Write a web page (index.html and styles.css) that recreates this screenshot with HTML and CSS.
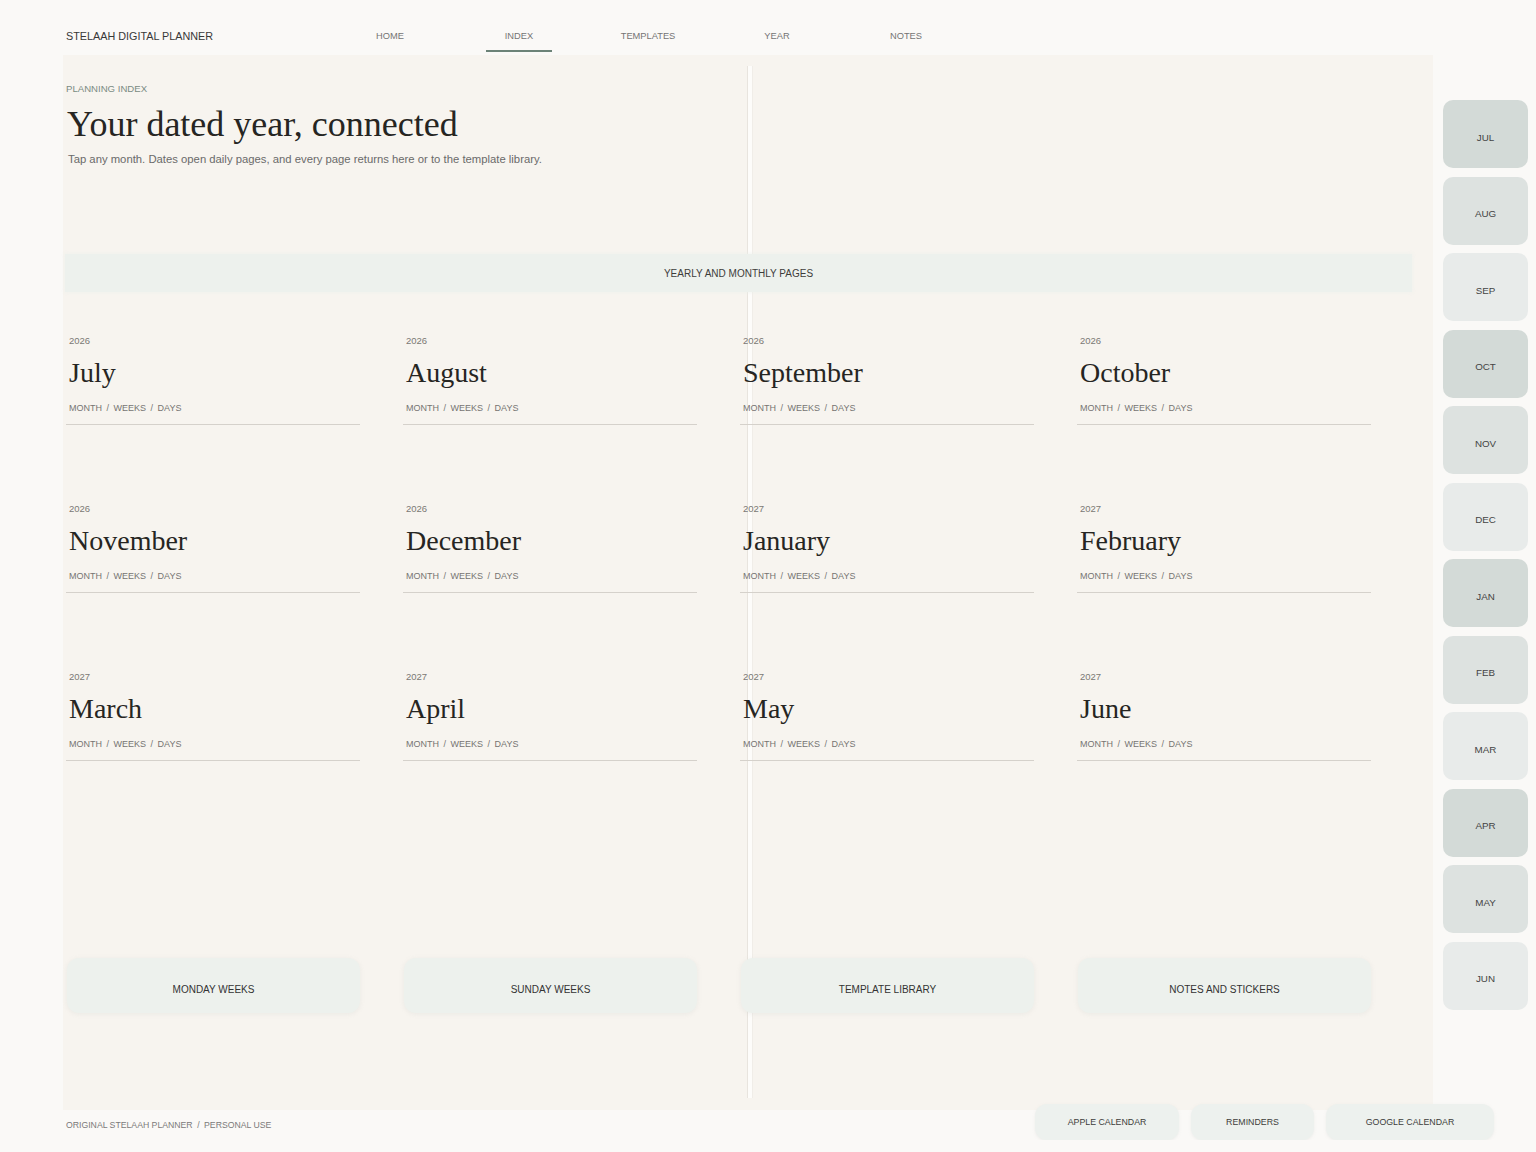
FILE: index.html
```html
<!DOCTYPE html>
<html lang="en">
<head>
  <meta charset="UTF-8">
  <meta name="viewport" content="width=device-width, initial-scale=1.0">
  <title>Stelaah Digital Planner - Index</title>
  <link rel="stylesheet" href="styles.css">
</head>
<body>
  <header class="topbar">
    <div class="brand">STELAAH DIGITAL PLANNER</div>
    <nav class="main-nav">
      <a href="#">HOME</a>
      <a href="#" class="active">INDEX</a>
      <a href="#">TEMPLATES</a>
      <a href="#">YEAR</a>
      <a href="#">NOTES</a>
    </nav>
  </header>

  <div class="layout">
    <main class="page">
      <div class="spine"></div>

      <div class="eyebrow">PLANNING INDEX</div>
      <h1>Your dated year, connected</h1>
      <p class="lead">Tap any month. Dates open daily pages, and every page returns here or to the template library.</p>

      <div class="banner">YEARLY AND MONTHLY PAGES</div>

      <div class="month-grid">
        <a class="month" href="#"><span class="year">2026</span><span class="name">July</span><span class="links">MONTH<i>/</i>WEEKS<i>/</i>DAYS</span></a>
        <a class="month" href="#"><span class="year">2026</span><span class="name">August</span><span class="links">MONTH<i>/</i>WEEKS<i>/</i>DAYS</span></a>
        <a class="month" href="#"><span class="year">2026</span><span class="name">September</span><span class="links">MONTH<i>/</i>WEEKS<i>/</i>DAYS</span></a>
        <a class="month" href="#"><span class="year">2026</span><span class="name">October</span><span class="links">MONTH<i>/</i>WEEKS<i>/</i>DAYS</span></a>
        <a class="month" href="#"><span class="year">2026</span><span class="name">November</span><span class="links">MONTH<i>/</i>WEEKS<i>/</i>DAYS</span></a>
        <a class="month" href="#"><span class="year">2026</span><span class="name">December</span><span class="links">MONTH<i>/</i>WEEKS<i>/</i>DAYS</span></a>
        <a class="month" href="#"><span class="year">2027</span><span class="name">January</span><span class="links">MONTH<i>/</i>WEEKS<i>/</i>DAYS</span></a>
        <a class="month" href="#"><span class="year">2027</span><span class="name">February</span><span class="links">MONTH<i>/</i>WEEKS<i>/</i>DAYS</span></a>
        <a class="month" href="#"><span class="year">2027</span><span class="name">March</span><span class="links">MONTH<i>/</i>WEEKS<i>/</i>DAYS</span></a>
        <a class="month" href="#"><span class="year">2027</span><span class="name">April</span><span class="links">MONTH<i>/</i>WEEKS<i>/</i>DAYS</span></a>
        <a class="month" href="#"><span class="year">2027</span><span class="name">May</span><span class="links">MONTH<i>/</i>WEEKS<i>/</i>DAYS</span></a>
        <a class="month" href="#"><span class="year">2027</span><span class="name">June</span><span class="links">MONTH<i>/</i>WEEKS<i>/</i>DAYS</span></a>
      </div>

      <div class="quick-links">
        <a href="#">MONDAY WEEKS</a>
        <a href="#">SUNDAY WEEKS</a>
        <a href="#">TEMPLATE LIBRARY</a>
        <a href="#">NOTES AND STICKERS</a>
      </div>
    </main>

    <!-- month tabs -->
    <aside class="tabs">
      <a href="#" class="tab dark">JUL</a>
      <a href="#" class="tab mid">AUG</a>
      <a href="#" class="tab light">SEP</a>
      <a href="#" class="tab dark">OCT</a>
      <a href="#" class="tab mid">NOV</a>
      <a href="#" class="tab light">DEC</a>
      <a href="#" class="tab dark">JAN</a>
      <a href="#" class="tab mid">FEB</a>
      <a href="#" class="tab light">MAR</a>
      <a href="#" class="tab dark">APR</a>
      <a href="#" class="tab mid">MAY</a>
      <a href="#" class="tab light">JUN</a>
    </aside>
  </div>

  <footer class="footer">
    <div class="credit">ORIGINAL STELAAH PLANNER<i>/</i>PERSONAL USE</div>
    <div class="calendars">
      <a href="#">APPLE CALENDAR</a>
      <a href="#">REMINDERS</a>
      <a href="#">GOOGLE CALENDAR</a>
    </div>
  </footer>
</body>
</html>
```

FILE: styles.css
```css
* {
  box-sizing: border-box;
}

body {
  margin: 0;
  font-family: 'Liberation Sans', Arial, sans-serif;
  background: #faf9f7;
  color: #333;
  width: 1536px;
}

a {
  color: inherit;
  text-decoration: none;
}

i {
  font-style: normal;
}

/* Top bar */
.topbar {
  height: 55px;
  display: flex;
  align-items: flex-end;
  padding: 0 0 3px 66px;
}

.brand {
  width: 291px;
  font-size: 10.8px;
  line-height: 12px;
  margin-bottom: 10px;
  color: #383838;
}

.main-nav {
  display: flex;
  gap: 63px;
}

.main-nav a {
  width: 66px;
  text-align: center;
  font-size: 9.3px;
  line-height: 12px;
  color: #747474;
  padding-bottom: 8px;
  border-bottom: 2px solid transparent;
}

.main-nav a.active {
  border-bottom-color: #6b8277;
}

/* Main layout */
.layout {
  display: flex;
  padding-left: 63px;
}

.page {
  position: relative;
  z-index: 0;
  width: 1370px;
  height: 1055px;
  background: #f7f4ef;
  padding: 28px 21px 0 2px;
}

.spine {
  position: absolute;
  z-index: -1;
  left: 684px;
  top: 11px;
  bottom: 12px;
  width: 6px;
  background: #fdfcfa;
  border-left: 1px solid #e8e4de;
  border-right: 1px solid #f0ede8;
}

.eyebrow {
  padding-left: 1px;
  font-size: 9.6px;
  line-height: 12px;
  color: #7a8b83;
}

h1 {
  margin: 9px 0 0 2px;
  font-family: 'Liberation Serif', 'Times New Roman', serif;
  font-weight: normal;
  font-size: 36px;
  line-height: 40px;
  color: #262522;
}

.lead {
  margin: 8px 0 0 3px;
  font-size: 11.3px;
  line-height: 14px;
  color: #6a6a6a;
}

.banner {
  margin-top: 88px;
  height: 38px;
  background: #edf1ed;
  display: flex;
  align-items: center;
  justify-content: center;
  font-size: 10px;
  color: #3d3d3b;
  box-shadow: 0 0 4px rgba(237, 241, 237, 0.9);
}

/* Month cards */
.month-grid {
  width: 1305px;
  margin: 43px 0 0 1px;
  display: grid;
  grid-template-columns: repeat(4, 1fr);
  column-gap: 43px;
  row-gap: 78px;
}

.month {
  display: flex;
  flex-direction: column;
  padding: 0 3px 10px;
  border-bottom: 1px solid #d5d1cb;
}

.month .year {
  font-size: 9.5px;
  line-height: 12px;
  color: #7a7874;
}

.month .name {
  margin-top: 10px;
  font-family: 'Liberation Serif', 'Times New Roman', serif;
  font-size: 28px;
  line-height: 32px;
  color: #262522;
}

.month .links {
  margin-top: 13px;
  font-size: 9px;
  line-height: 12px;
  color: #767472;
}

.month .links i {
  margin: 0 4.5px;
}

/* Quick links at the bottom */
.quick-links {
  width: 1305px;
  margin: 197px 0 0 2px;
  display: grid;
  grid-template-columns: repeat(4, 293px);
  column-gap: 44px;
}

.quick-links a {
  height: 55px;
  padding-top: 7px;
  border-radius: 12px;
  background: #edf1ed;
  display: flex;
  align-items: center;
  justify-content: center;
  font-size: 10px;
  color: #333;
  box-shadow: 0 1px 4px rgba(200, 205, 200, 0.25);
}

/* Side tabs */
.tabs {
  margin: 45px 0 0 10px;
  display: flex;
  flex-direction: column;
  gap: 8.5px;
}

.tab {
  width: 85px;
  height: 68px;
  padding-top: 6px;
  border-radius: 10px;
  display: flex;
  align-items: center;
  justify-content: center;
  font-size: 9.8px;
  color: #444;
}

.tab.dark {
  background: #d3dad7;
}

.tab.mid {
  background: #dde2e0;
}

.tab.light {
  background: #e8ebea;
}

/* Footer sits slightly over the page bottom */
.footer {
  position: relative;
  z-index: 1;
  margin-top: -6px;
  height: 36px;
  display: flex;
  align-items: center;
  justify-content: space-between;
  padding: 0 42px 0 66px;
}

.credit {
  margin-top: 5px;
  font-size: 8.7px;
  color: #7a7a7a;
}

.credit i {
  margin: 0 4.5px;
}

.calendars {
  display: grid;
  grid-template-columns: 144px 123px 168px;
  gap: 12px;
}

.calendars a {
  height: 36px;
  border-radius: 12px;
  background: #edf1ee;
  display: flex;
  align-items: center;
  justify-content: center;
  font-size: 8.8px;
  color: #3d3d3b;
  box-shadow: 0 1px 3px rgba(200, 205, 200, 0.25);
}
```
